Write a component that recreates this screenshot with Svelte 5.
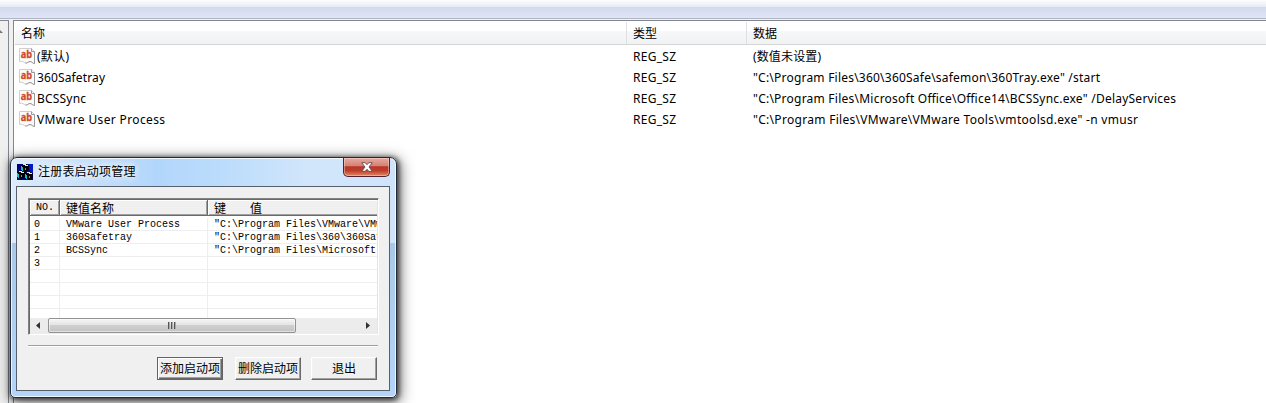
<script>
  const values = [
    { name: '(默认)', data: '(数值未设置)', nw: 32, dw: 68 },
    { name: '360Safetray', data: '"C:\\Program Files\\360\\360Safe\\safemon\\360Tray.exe" /start', nw: 68, dw: 347 },
    { name: 'BCSSync', data: '"C:\\Program Files\\Microsoft Office\\Office14\\BCSSync.exe" /DelayServices', nw: 49, dw: 423 },
    { name: 'VMware User Process', data: '"C:\\Program Files\\VMware\\VMware Tools\\vmtoolsd.exe" -n vmusr', nw: 128, dw: 385 },
  ];
  const items = [
    ['0', 'VMware User Process', '"C:\\Program Files\\VMware\\VMware Tools\\vmtoolsd.exe" -n vmusr'],
    ['1', '360Safetray', '"C:\\Program Files\\360\\360Safe\\safemon\\360Tray.exe" /start'],
    ['2', 'BCSSync', '"C:\\Program Files\\Microsoft Office\\Office14\\BCSSync.exe" /DelayServices'],
    ['3', '', ''],
    ['', '', ''],
    ['', '', ''],
    ['', '', ''],
    ['', '', ''],
  ];
</script>

{#snippet label(text, width)}
  <svg class="label" width={width + 4} height="20"><text x="0" y="14" textLength={width} lengthAdjust="spacing">{text}</text></svg>
{/snippet}

{#snippet cube(x, y)}
  <g transform="translate({x} {y})">
    <path d="M2 0H6V1H8V6H7V7H5V8H3V7H1V6H0V1H2Z" fill="#000" />
    <path d="M2 0H5V1H7V2H4V1H2Z" fill="#e8e8e8" />
    <path d="M0 2H1V3H2V7H1V6H0Z" fill="#00c8c8" />
    <path d="M4 4H5V6H4Z" fill="#8a8a8a" />
  </g>
{/snippet}

<div class="desktop">
  <div class="toolbar"></div>
  <div class="body">
    <div class="tree"><svg width="8" height="30"><path d="M0 9L3 12H0Z" fill="#777" /></svg></div>
    <div class="split"></div>
    <div class="list">
      <div class="row head">
        <div>名称</div><div>类型</div><div>数据</div>
      </div>
      {#each values as v}
        <div class="row">
          <div class="name">
            <svg class="ab" width="17" height="17" viewBox="0 0 17 17">
              <path d="M.5.5H12.5L15.5 3.5V15.5C13.5 15.5 13 13.5 11 13.5S8.500 15.5 6.500 15C4.500 14.500 4 12.500 .5 13.500Z" fill="#fbfbfb" stroke="#cfcfcf" />
              <path d="M12.500.5V3.500H15.500V15.500C13.500 15.500 13 13.500 11 13.500S8.500 15.500 6.500 15" fill="none" stroke="#999" />
              <text x="1.800" y="10" textLength="11.400" lengthAdjust="spacingAndGlyphs">ab</text>
            </svg>
            {@render label(v.name, v.nw)}
          </div>
          <div>{@render label('REG_SZ', 43)}</div>
          <div>{@render label(v.data, v.dw)}</div>
        </div>
      {/each}
    </div>
  </div>

  <div class="window">
    <div class="title">
      <svg width="16" height="16" viewBox="0 0 16 16" shape-rendering="crispEdges">
        <path d="M0 0H16V16H0Z" fill="#00007b" />
        <path d="M10 0H16V9H13V6H10Z" fill="#0018c8" />
        {@render cube(4, 0)}
        {@render cube(0, 7)}
        {@render cube(8, 8)}
      </svg>
      <span>注册表启动项管理</span>
      <div class="close">
        <svg width="12" height="10" viewBox="0 0 12 10"><path d="M.7.7H4.200L6 2.700L7.800.7H11.300L8 5L11.300 9.300H7.800L6 7.300L4.200 9.300H.7L4 5Z" fill="#fff" stroke="#5d4a54" stroke-width=".9" /></svg>
      </div>
    </div>
    <div class="client">
      <div class="view">
        <div class="vrow vhead"><div class="no">NO.</div><div>键值名称</div><div class="kv">键　　值</div></div>
        <div class="rows">
          {#each items as it}
            <div class="vrow"><div>{it[0]}</div><div>{it[1]}</div><div>{it[2]}</div></div>
          {/each}
        </div>
        <div class="scroll">
          <svg width="18" height="16"><path d="M10 4V11L6 7.500Z" fill="#333" /></svg>
          <div class="thumb"><i></i><i></i><i></i></div>
          <span class="space"></span>
          <svg width="18" height="16"><path d="M7 4V11L11 7.500Z" fill="#333" /></svg>
        </div>
      </div>
      <div class="rule"></div>
      <div class="buttons">
        <div class="btn default">添加启动项</div>
        <div class="btn">删除启动项</div>
        <div class="btn exit">退出</div>
      </div>
    </div>
  </div>
</div>

<style>
  :global(body) { margin: 0; overflow: hidden; }
  .desktop {
    position: relative; width: 1266px; height: 403px; overflow: hidden;
    display: flex; flex-direction: column; background: #fff;
    font: 12px "Noto Sans", "Noto Sans CJK SC", sans-serif; color: #000;
  }
  .desktop * { box-sizing: border-box; }
  svg { display: block; flex: none; }
  .toolbar {
    height: 20px; flex: none; border-bottom: 1px solid #f0f2f8;
    background: linear-gradient(#b2b6c2, #b2b6c2) 0 18px / 100% 1px no-repeat,
      linear-gradient(#fefeff 0, #e6eaf4 7px, #d3daed 7px, #dfe5f6 18px);
  }
  .body { display: flex; flex: 1; min-height: 0; }
  .tree { width: 9px; background: #f0f0f0; border-top: 1px solid #828790; border-right: 1px solid #828790; }
  .split { width: 4px; background: #f0f0f0; }
  .list { flex: 1; border-top: 1px solid #828790; border-left: 1px solid #828790; padding: 1px 0 0 1px; }
  .row { display: grid; grid-template-columns: 612px 120px 1fr; height: 21px; align-items: center; }
  .row > div { padding-left: 6px; }
  .row > .name { display: flex; padding-left: 4px; }
  .name .ab { margin-right: 1px; margin-top: 1px; overflow: visible; }
  .head { height: 23px; margin-bottom: 1px; background: linear-gradient(#fff 9px, #f6f7f9 9px, #f1f2f4); border-bottom: 1px solid #d5d5d5; font-family: "Noto Sans CJK SC", sans-serif; }
  .head > div { height: 22px; line-height: 22px; border-right: 1px solid #dfe0e3; }
  .head > div:last-child { border: 0; }
  .label { overflow: visible; }
  .ab text { font: bold 10.5px "Noto Sans", sans-serif; fill: #d3482a; stroke: #d3482a; stroke-width: .3; }

  .window {
    position: absolute; left: 10px; top: 157px; width: 387px; height: 241px;
    border: 1px solid #232b38; border-radius: 7px 7px 5px 5px; padding: 0 6px 6px 5px;
    background: linear-gradient(90deg, #dcecfb 0, #c8e0fa 70px, #b2d6fb 145px, #bbdcfb 210px, #d2e6fb 300px, #cfe4fb) 0 0 / 100% 85px no-repeat,
      linear-gradient(#d8e9fa 85px, #a9c8e9 85px, #b4d4fa);
    box-shadow: inset 0 0 0 1px rgba(255,255,255,.75), 1px 1px 5px 1px rgba(0,0,0,.65), 2px 3px 14px 2px rgba(0,0,0,.5);
  }
  .title { height: 28px; display: flex; font: 12px "Noto Sans CJK SC", sans-serif; }
  .title > svg { margin: 6px 0 0 1px; }
  .title span { margin-left: 5px; line-height: 26px; letter-spacing: .2px; width: 100px; white-space: nowrap; text-shadow: 0 0 6px #fff, 0 0 8px #fff; }
  .close {
    margin-left: auto; width: 47px; height: 19px; padding: 4px 0 0 17px;
    border: 1px solid #51232a; border-top: 0; border-radius: 0 0 5px 5px;
    background: linear-gradient(#e7aaa0, #d48074 45%, #b93627 48%, #be3d29 70%, #dc8b67);
    box-shadow: inset 0 0 0 1px rgba(255,220,210,.45);
  }
  .client { height: 205px; border: 1px solid #56606d; background: #f0f0f0; padding: 11px 10px 0 11px; }
  .view { height: 137px; width: 351px; border-top: 1px solid #828282; border-left: 1px solid #828282; border-right: 1px solid #fff; border-bottom: 1px solid #fff; background: #fff; box-shadow: inset 1px 1px #696969, inset -1px -1px #e3e3e3; padding: 1px; font: 10px/13px "Liberation Mono", "Noto Sans CJK SC", monospace; overflow: hidden; }
  .vrow { display: grid; grid-template-columns: 30px 148px 1fr; height: 13px; }
  .vrow > div { overflow: hidden; white-space: nowrap; border-right: 1px solid #eee; padding-left: 6px; }
  .vrow > div:first-child { padding-left: 4px; }
  .vrow > div:last-child { border-right: 0; }
  .vhead { height: 16px; }
  .vhead > div { background: #f0f0f0; border-right: 1px solid #696969; border-bottom: 1px solid #696969; box-shadow: inset 1px 1px #fff, inset -1px -1px #a0a0a0; font: 12px/15px "Noto Sans CJK SC", sans-serif; }
  .vhead > div:last-child { border-right: 0; box-shadow: inset 1px 1px #fff, inset 0 -1px #a0a0a0; }
  .vhead > div.no { font: 10px/16px "Liberation Mono", monospace; padding-left: 6px; }
  .rows { height: 102px; padding-top: 2px; overflow: hidden; }
  .rows .vrow { line-height: 13px; background: linear-gradient(#eee, #eee) 0 12px / 100% 1px no-repeat; }
  .scroll { height: 16px; display: flex; background: #ececec; }
  .space { flex: 1; }
  .thumb { width: 248px; height: 15px; border: 1px solid #929292; border-radius: 2px; display: flex; gap: 1px; justify-content: center; align-items: center; background: linear-gradient(#f5f5f5, #e4e4e4 45%, #cfcfcf 50%, #c3c3c5); box-shadow: inset 0 0 0 1px #ffffff80; }
  .thumb i { width: 2px; height: 7px; background: linear-gradient(90deg, #555 1px, #aaa 1px); }
  .rule { height: 2px; margin-top: 10px; width: 350px; border-top: 1px solid #a0a0a0; border-bottom: 1px solid #fff; }
  .buttons { display: flex; margin: 10px 0 0 129px; gap: 12px; font: 12px/20px "Noto Sans CJK SC", sans-serif; }
  .btn { width: 66px; height: 23px; display: flex; justify-content: center; white-space: nowrap; background: #f0f0f0; border: 1px solid; border-color: #fff #696969 #696969 #fff; box-shadow: inset -1px -1px #a0a0a0, inset 1px 1px #f3f3f3; }
  .exit { margin-left: -2px; }
  .default { border-color: #646464; box-shadow: inset 1px 1px #fff, inset -1px -1px #696969, inset -2px -2px #a0a0a0; }
</style>
